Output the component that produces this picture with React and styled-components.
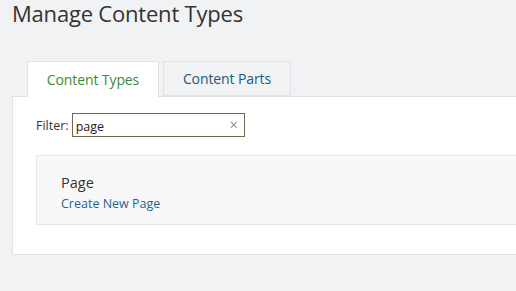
import React, { useState } from "react";
import styled, { createGlobalStyle } from "styled-components";

const GlobalStyle = createGlobalStyle`
  html, body {
    margin: 0;
    padding: 0;
    background: #f1f2f4;
    overflow: hidden;
  }
  body {
    font-family: "Open Sans", "Noto Sans", sans-serif;
    color: #333;
  }
`;

const Page = styled.div`
  width: 580px;
  padding: 0 0 0 12px;
`;

const Title = styled.h1`
  margin: 0;
  font-size: 22px;
  font-weight: 400;
  line-height: 26px;
  color: #333;
  letter-spacing: -0.2px;
`;

const TabList = styled.div`
  display: flex;
  gap: 4px;
  padding-left: 15px;
  margin-top: 35px;
  position: relative;
  z-index: 1;
`;

const Tab = styled.button`
  font-family: inherit;
  font-size: 14px;
  padding: 0;
  width: ${(p) => p.$width}px;
  height: ${(p) => (p.$active ? 36 : 35)}px;
  margin-bottom: ${(p) => (p.$active ? -1 : 0)}px;
  border: 1px solid #e0e2e5;
  border-bottom: ${(p) => (p.$active ? "none" : "1px solid #e0e2e5")};
  background: ${(p) => (p.$active ? "#fff" : "#f1f2f4")};
  color: ${(p) => (p.$active ? "#3e8a31" : "#22597d")};
  cursor: pointer;
  letter-spacing: -0.1px;
`;

const Panel = styled.section`
  background: #fff;
  border: 1px solid #e0e2e5;
  padding: 16px 0 29px 23px;
`;

const FilterRow = styled.div`
  display: flex;
  align-items: center;
  gap: 3px;
  margin-bottom: 18px;
`;

const Label = styled.label`
  font-size: 12.5px;
  color: #333;
`;

const InputBox = styled.div`
  position: relative;
  width: 173px;
  height: 24px;
  box-sizing: border-box;
  border: 1px solid #6b6b52;
`;

const Input = styled.input`
  box-sizing: border-box;
  width: 100%;
  height: 100%;
  border: none;
  outline: none;
  padding: 0 20px 0 3px;
  font-family: inherit;
  font-size: 12.5px;
  color: #222;
  background: transparent;
  caret-color: #000;
`;

const Clear = styled.span`
  position: absolute;
  right: 6px;
  top: 50%;
  transform: translateY(-52%);
  font-size: 14px;
  color: #888;
  line-height: 1;
`;

const Card = styled.div`
  background: #f8f8f8;
  border: 1px solid #e6e6e6;
  height: 70px;
  box-sizing: border-box;
  padding: 16px 0 0 24px;
`;

const CardTitle = styled.div`
  font-size: 14.5px;
  line-height: 22px;
  color: #333;
`;

const CardLink = styled.a`
  display: block;
  margin-top: 1px;
  font-size: 12.5px;
  line-height: 18px;
  color: #26658a;
  text-decoration: none;
`;

export default function App() {
  const [filter, setFilter] = useState("page");
  return (
    <>
      <GlobalStyle />
      <Page>
        <Title>Manage Content Types</Title>
        <TabList>
          <Tab $active $width={132}>Content Types</Tab>
          <Tab $width={128}>Content Parts</Tab>
        </TabList>
        <Panel>
          <FilterRow>
            <Label>Filter:</Label>
            <InputBox>
              <Input value={filter} onChange={(e) => setFilter(e.target.value)} />
              <Clear>×</Clear>
            </InputBox>
          </FilterRow>
          <Card>
            <CardTitle>Page</CardTitle>
            <CardLink href="#">Create New Page</CardLink>
          </Card>
        </Panel>
      </Page>
    </>
  );
}
